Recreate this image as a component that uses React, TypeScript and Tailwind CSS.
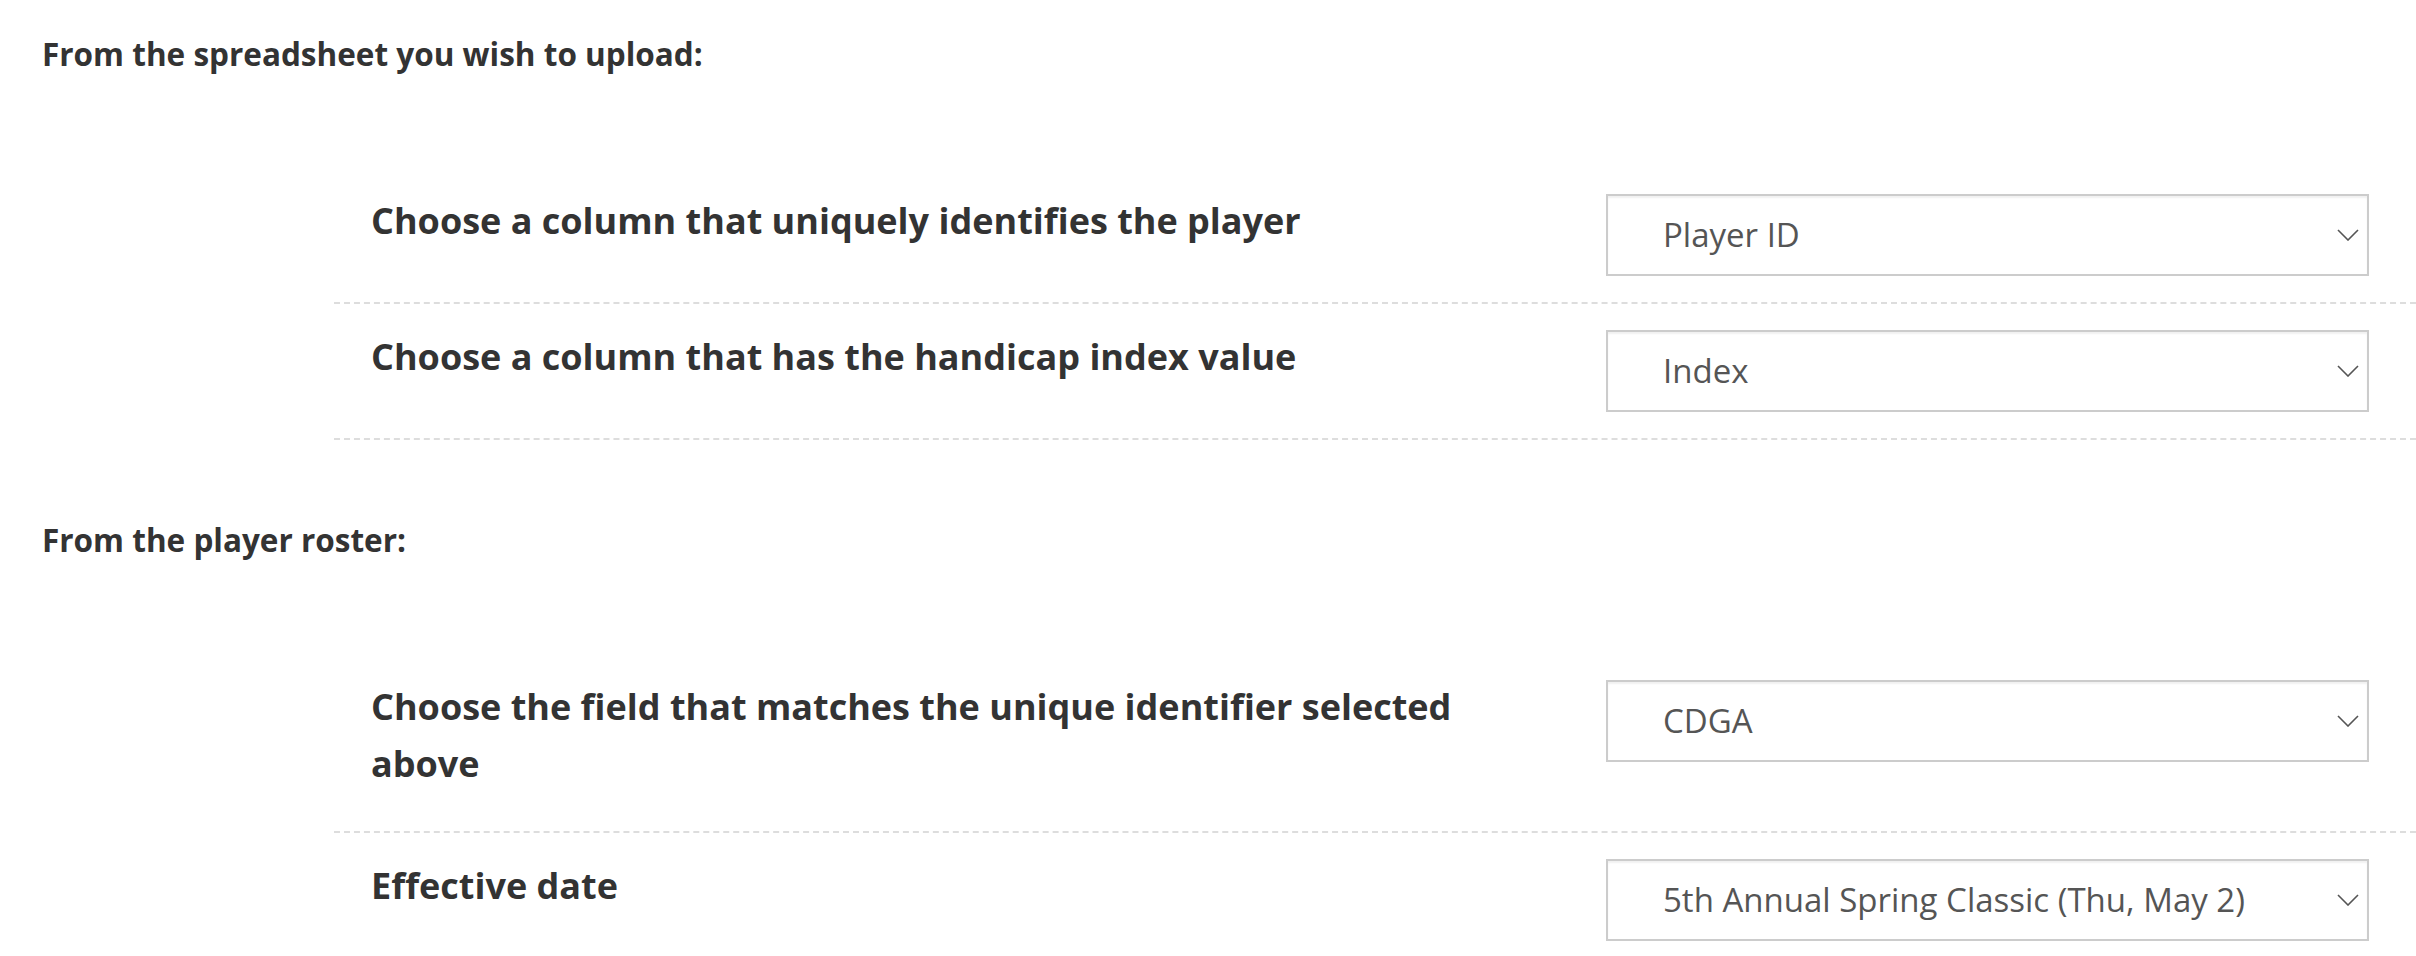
import React from 'react';

// Mapping rows for the spreadsheet upload
const SHEET_ROWS = [
  { id: 'player', label: 'Choose a column that uniquely identifies the player', value: 'Player ID' },
  { id: 'index', label: 'Choose a column that has the handicap index value', value: 'Index' },
];

const ROSTER_ROWS = [
  { id: 'field', label: 'Choose the field that matches the unique identifier selected above', value: 'CDGA' },
  { id: 'date', label: 'Effective date', value: '5th Annual Spring Classic (Thu, May 2)' },
];

const Chevron = () => (
  <svg width="22" height="12" viewBox="0 0 22 12" fill="none" className="shrink-0">
    <path d="M1 1 L11 11 L21 1" stroke="#555555" strokeWidth="1.6" />
  </svg>
);

const FakeSelect = ({ value }: { value: string }) => (
  <div className="flex items-center justify-between w-[763px] h-[82px] border-2 border-[#cccccc] bg-white pl-[55px] pr-[8px] shadow-[inset_0_2px_2px_rgba(0,0,0,0.06)] cursor-pointer">
    <span className="text-[33px] text-[#555555] font-normal">{value}</span>
    <Chevron />
  </div>
);

const MappingRow = ({ label, value }: { label: string; value: string }) => (
  <div className="flex items-start pl-[37px] border-b-2 border-dashed border-[#dddddd]">
    <div className="flex-1 pt-[24px] pb-[39px] pr-[90px]">
      <h3 className="text-[36px] leading-[57px] font-bold text-[#333333]">{label}</h3>
    </div>
    <div className="py-[26px] mr-[47px]">
      <FakeSelect value={value} />
    </div>
  </div>
);

const Section = ({ title, rows }: { title: string; rows: typeof SHEET_ROWS }) => (
  <section>
    <h2 className="pl-[42px] text-[31.5px] leading-[40px] font-bold text-[#333333] mb-[94px]">{title}</h2>
    <div className="ml-[334px]">
      {rows.map(row => (
        <MappingRow key={row.id} label={row.label} value={row.value} />
      ))}
    </div>
  </section>
);

const App = () => {
  return (
    <div className="min-h-screen bg-white pt-[34px] font-['Open_Sans',sans-serif]">
      <Section title="From the spreadsheet you wish to upload:" rows={SHEET_ROWS} />
      <div className="mt-[80px]">
        <Section title="From the player roster:" rows={ROSTER_ROWS} />
      </div>
    </div>
  );
};

export default App;
